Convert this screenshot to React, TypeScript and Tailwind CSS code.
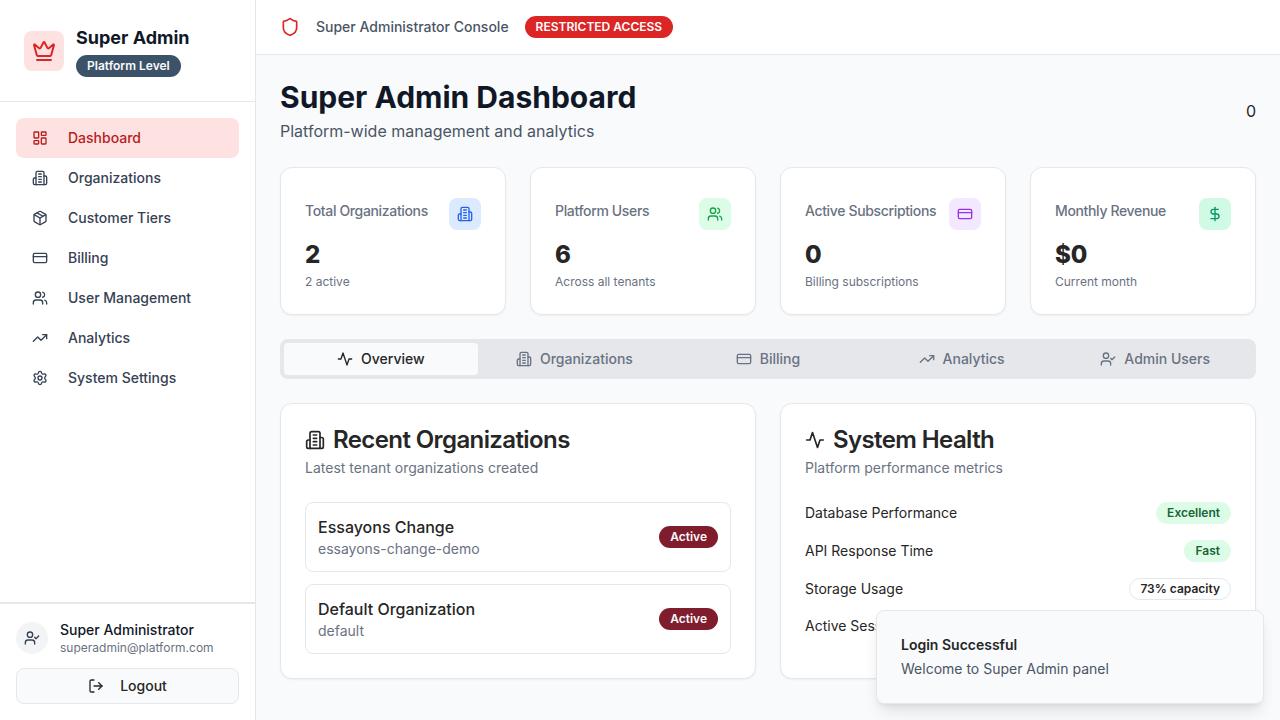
import {
  CreditCard,
  Crown,
  DollarSign,
  LayoutDashboard,
  LogOut,
  Package,
  Settings,
  Shield,
  TrendingUp,
  UserCheck,
  Users,
} from 'lucide-react'

type IconProps = { size?: number; className?: string }

// older lucide shapes, the ones in the installed package have changed
function Svg({ size = 16, className, children }: IconProps & { children: React.ReactNode }) {
  return (
    <svg
      width={size}
      height={size}
      viewBox="0 0 24 24"
      fill="none"
      stroke="currentColor"
      strokeWidth={2}
      strokeLinecap="round"
      strokeLinejoin="round"
      className={className}
    >
      {children}
    </svg>
  )
}

function Building({ size, className }: IconProps) {
  return (
    <Svg size={size} className={className}>
      <path d="M6 22V4a2 2 0 0 1 2-2h8a2 2 0 0 1 2 2v18Z" />
      <path d="M6 12H4a2 2 0 0 0-2 2v6a2 2 0 0 0 2 2h2" />
      <path d="M18 9h2a2 2 0 0 1 2 2v9a2 2 0 0 1-2 2h-2" />
      <path d="M10 6h4" />
      <path d="M10 10h4" />
      <path d="M10 14h4" />
      <path d="M10 18h4" />
    </Svg>
  )
}

function Activity({ size, className }: IconProps) {
  return (
    <Svg size={size} className={className}>
      <path d="M22 12h-4l-3 9L9 3l-3 9H2" />
    </Svg>
  )
}

const nav = [
  { label: 'Dashboard', icon: LayoutDashboard, active: true },
  { label: 'Organizations', icon: Building },
  { label: 'Customer Tiers', icon: Package },
  { label: 'Billing', icon: CreditCard },
  { label: 'User Management', icon: Users },
  { label: 'Analytics', icon: TrendingUp },
  { label: 'System Settings', icon: Settings },
]

const stats = [
  { title: 'Total Organizations', value: '2', sub: '2 active', icon: Building, box: 'bg-[#dbeafe] text-[#2563eb]' },
  { title: 'Platform Users', value: '6', sub: 'Across all tenants', icon: Users, box: 'bg-[#dcfce7] text-[#16a34a]' },
  { title: 'Active Subscriptions', value: '0', sub: 'Billing subscriptions', icon: CreditCard, box: 'bg-[#f3e8ff] text-[#9333ea]' },
  { title: 'Monthly Revenue', value: '$0', sub: 'Current month', icon: DollarSign, box: 'bg-[#d1fae5] text-[#059669]' },
]

const tabs = [
  { label: 'Overview', icon: Activity, active: true },
  { label: 'Organizations', icon: Building },
  { label: 'Billing', icon: CreditCard },
  { label: 'Analytics', icon: TrendingUp },
  { label: 'Admin Users', icon: UserCheck },
]

const orgs = [
  { name: 'Essayons Change', slug: 'essayons-change-demo' },
  { name: 'Default Organization', slug: 'default' },
]

function Sidebar() {
  return (
    <aside className="flex h-full w-64 shrink-0 flex-col border-r border-gray-200 bg-white">
      <div className="flex h-[102px] items-center gap-3 border-b border-gray-200 px-6">
        <div className="flex h-10 w-10 items-center justify-center rounded-lg bg-[#fee2e2] text-[#dc2626]">
          <Crown size={24} />
        </div>
        <div>
          <div className="text-lg leading-7 font-bold text-gray-900">Super Admin</div>
          <span className="inline-flex h-[22px] items-center rounded-full bg-[#3b5268] px-[11px] text-xs font-semibold text-gray-50">
            Platform Level
          </span>
        </div>
      </div>
      <nav className="flex-1 p-4">
        {nav.map((item) => (
          <div
            key={item.label}
            className={
              item.active
                ? 'flex h-10 items-center gap-5 rounded-lg bg-[#fee2e2] px-4 text-sm font-medium text-[#b91c1c]'
                : 'flex h-10 items-center gap-5 rounded-lg px-4 text-sm font-medium text-gray-700'
            }
          >
            <item.icon size={16} />
            {item.label}
          </div>
        ))}
      </nav>
      <div className="border-t-2 border-gray-200 p-4">
        <div className="flex items-center gap-3">
          <div className="flex h-8 w-8 items-center justify-center rounded-full bg-gray-100 text-gray-700">
            <UserCheck size={16} />
          </div>
          <div>
            <div className="text-sm leading-5 font-medium text-gray-900">Super Administrator</div>
            <div className="text-xs leading-4 text-gray-500">superadmin@platform.com</div>
          </div>
        </div>
        <div className="mt-3 flex h-9 items-center justify-center gap-4 rounded-lg border border-gray-200 bg-gray-50 text-sm font-medium text-[#262626]">
          <LogOut size={16} />
          Logout
        </div>
      </div>
    </aside>
  )
}

function StatCard({ stat }: { stat: (typeof stats)[number] }) {
  return (
    <div className="h-[148px] rounded-xl border border-gray-200 bg-white px-6 pt-[30px] shadow-[0_1px_2px_0_rgba(0,0,0,0.05)]">
      <div className="flex items-start justify-between">
        <div className="mt-[3px] text-sm leading-5 font-medium tracking-tight text-gray-500">{stat.title}</div>
        <div className={`flex h-8 w-8 items-center justify-center rounded-lg ${stat.box}`}>
          <stat.icon size={16} />
        </div>
      </div>
      <div className="mt-[9px] text-2xl font-extrabold text-[#262626]">{stat.value}</div>
      <div className="mt-[3px] text-xs text-gray-500">{stat.sub}</div>
    </div>
  )
}

function Badge({ className, children }: { className: string; children: React.ReactNode }) {
  return (
    <span className={`inline-flex h-[22px] items-center rounded-full px-[11px] text-xs font-semibold ${className}`}>
      {children}
    </span>
  )
}

function HealthRow({ label, children }: { label: string; children?: React.ReactNode }) {
  return (
    <div className="flex items-center justify-between text-sm text-[#262626]">
      <span>{label}</span>
      {children}
    </div>
  )
}

export default function App() {
  return (
    <div className="relative flex h-screen overflow-hidden bg-gray-50 font-['Inter',sans-serif]">
      <Sidebar />
      <div className="flex min-w-0 flex-1 flex-col">
        <header className="flex h-[55px] shrink-0 items-center gap-4 border-b border-gray-200 bg-white px-6">
          <Shield size={20} className="text-[#dc2626]" />
          <span className="text-sm font-medium text-gray-600">Super Administrator Console</span>
          <span className="inline-flex h-[22px] items-center rounded-full bg-[#dc2626] px-[11px] text-xs font-semibold text-white">
            RESTRICTED ACCESS
          </span>
        </header>
        <main className="flex-1 p-6">
          <div className="flex items-center justify-between">
            <div>
              <h1 className="text-3xl font-bold text-gray-900">Super Admin Dashboard</h1>
              <p className="mt-1 text-gray-600">Platform-wide management and analytics</p>
            </div>
            <div className="text-[#262626]">0</div>
          </div>

          <div className="mt-6 grid grid-cols-4 gap-6">
            {stats.map((s) => (
              <StatCard key={s.title} stat={s} />
            ))}
          </div>

          <div className="mt-6 grid h-10 grid-cols-5 rounded-lg bg-gray-200 p-1">
            {tabs.map((t) => (
              <div
                key={t.label}
                className={
                  t.active
                    ? 'flex items-center justify-center gap-2 rounded-sm bg-gray-50 text-sm font-medium text-[#262626]'
                    : 'flex items-center justify-center gap-2 rounded-sm text-sm font-medium text-gray-500'
                }
              >
                <t.icon size={16} />
                {t.label}
              </div>
            ))}
          </div>

          <div className="mt-6 grid grid-cols-2 gap-6">
            <section className="h-[276px] rounded-xl border border-gray-200 bg-white p-6 shadow-[0_1px_2px_0_rgba(0,0,0,0.05)]">
              <h2 className="flex items-center gap-2 text-2xl leading-6 font-semibold tracking-tight text-[#262626]">
                <Building size={20} />
                Recent Organizations
              </h2>
              <p className="mt-[6px] text-sm text-gray-500">Latest tenant organizations created</p>
              <div className="mt-6 flex flex-col gap-3">
                {orgs.map((o) => (
                  <div
                    key={o.slug}
                    className="flex h-[70px] items-center justify-between rounded-lg border border-gray-200 px-3"
                  >
                    <div>
                      <div className="font-medium text-[#262626]">{o.name}</div>
                      <div className="text-sm text-gray-500">{o.slug}</div>
                    </div>
                    <Badge className="bg-[#7f1d2d] text-gray-50">Active</Badge>
                  </div>
                ))}
              </div>
            </section>

            <section className="h-[276px] rounded-xl border border-gray-200 bg-white p-6 shadow-[0_1px_2px_0_rgba(0,0,0,0.05)]">
              <h2 className="flex items-center gap-2 text-2xl leading-6 font-semibold tracking-tight text-[#262626]">
                <Activity size={20} />
                System Health
              </h2>
              <p className="mt-[6px] text-sm text-gray-500">Platform performance metrics</p>
              <div className="mt-6 flex flex-col gap-4">
                <HealthRow label="Database Performance">
                  <Badge className="bg-[#dcfce7] text-[#166534]">Excellent</Badge>
                </HealthRow>
                <HealthRow label="API Response Time">
                  <Badge className="bg-[#dcfce7] text-[#166534]">Fast</Badge>
                </HealthRow>
                <HealthRow label="Storage Usage">
                  <span className="inline-flex h-[22px] items-center rounded-full border border-gray-200 px-[10px] text-xs font-semibold text-[#262626]">
                    73% capacity
                  </span>
                </HealthRow>
                <HealthRow label="Active Sessions" />
              </div>
            </section>
          </div>
        </main>
      </div>

      <div className="absolute right-4 bottom-4 w-[388px] rounded-lg border border-gray-200 bg-gray-50 p-6 text-sm shadow-lg">
        <div className="leading-5 font-semibold text-[#262626]">Login Successful</div>
        <div className="mt-1 leading-5 text-gray-600">Welcome to Super Admin panel</div>
      </div>
    </div>
  )
}
